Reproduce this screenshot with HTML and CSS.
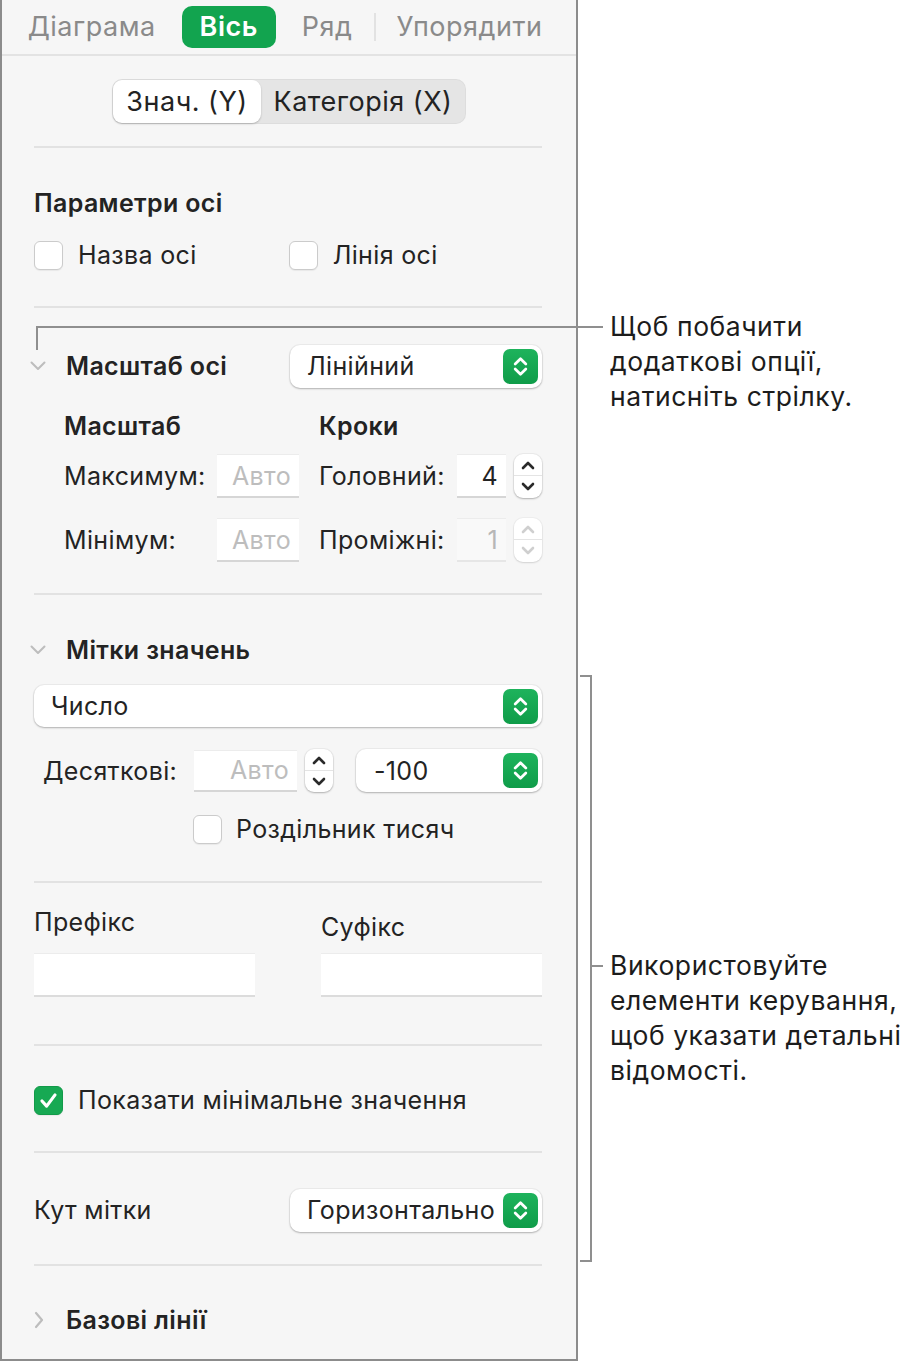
FILE: index.html
```html
<!DOCTYPE html>
<html lang="uk">
<head>
<meta charset="utf-8">
<title>Вісь</title>
<link rel="stylesheet" href="styles.css">
</head>
<body>
<svg class="defs" width="0" height="0" aria-hidden="true">
  <defs>
    <symbol id="updown" viewBox="0 0 36 36">
      <path d="M12.5 15.5 L18 10 L23.5 15.5" fill="none" stroke="#fff" stroke-width="2.8" stroke-linecap="round" stroke-linejoin="round"/>
      <path d="M12.5 20.5 L18 26 L23.5 20.5" fill="none" stroke="#fff" stroke-width="2.8" stroke-linecap="round" stroke-linejoin="round"/>
    </symbol>
    <symbol id="stepper" viewBox="0 0 28 44">
      <path d="M9 14 L14 9 L19 14" fill="none" stroke="currentColor" stroke-width="2.6" stroke-linecap="round" stroke-linejoin="round"/>
      <path d="M9 30 L14 35 L19 30" fill="none" stroke="currentColor" stroke-width="2.6" stroke-linecap="round" stroke-linejoin="round"/>
    </symbol>
    <symbol id="chev-down" viewBox="0 0 16 10">
      <path d="M1.5 1.5 L8 8 L14.5 1.5" fill="none" stroke="currentColor" stroke-width="2" stroke-linecap="round" stroke-linejoin="round"/>
    </symbol>
    <symbol id="chev-right" viewBox="0 0 10 18">
      <path d="M2 2 L8 9 L2 16" fill="none" stroke="currentColor" stroke-width="2.2" stroke-linecap="round" stroke-linejoin="round"/>
    </symbol>
  </defs>
</svg>
<div class="page">
  <div class="panel">
    <div class="tabs">
      <span class="tab">Діаграма</span>
      <span class="tab active">Вісь</span>
      <span class="tab">Ряд</span>
      <span class="tab-sep"></span>
      <span class="tab">Упорядити</span>
    </div>

    <div class="seg-wrap">
      <div class="seg">
        <span class="seg-item sel">Знач. (Y)</span>
        <span class="seg-item">Категорія (X)</span>
      </div>
    </div>

    <div class="hr hr-a"></div>

    <div class="title-row">Параметри осі</div>
    <div class="check-row">
      <label class="check"><span class="box"></span><span>Назва осі</span></label>
      <label class="check check-2"><span class="box"></span><span>Лінія осі</span></label>
    </div>

    <div class="hr hr-b"></div>

    <div class="disclosure-row scale-row">
      <svg class="chev-down"><use href="#chev-down"/></svg>
      <span class="dlabel">Масштаб осі</span>
      <div class="popup popup-scale"><span class="popup-text">Лінійний</span><span class="popup-btn"><svg><use href="#updown"/></svg></span></div>
    </div>

    <div class="scale-grid">
      <span class="bold c1">Масштаб</span>
      <span class="bold c3">Кроки</span>

      <span class="lbl">Максимум:</span>
      <span class="field placeholder">Авто</span>
      <span class="lbl c3">Головний:</span>
      <span class="field small">4</span>
      <span class="stepper"><svg><use href="#stepper"/></svg></span>

      <span class="lbl">Мінімум:</span>
      <span class="field placeholder">Авто</span>
      <span class="lbl c3">Проміжні:</span>
      <span class="field small disabled">1</span>
      <span class="stepper disabled"><svg><use href="#stepper"/></svg></span>
    </div>

    <div class="hr hr-c"></div>

    <div class="disclosure-row labels-row">
      <svg class="chev-down"><use href="#chev-down"/></svg>
      <span class="dlabel">Мітки значень</span>
    </div>

    <div class="popup popup-number"><span class="popup-text">Число</span><span class="popup-btn"><svg><use href="#updown"/></svg></span></div>

    <div class="decimal-row">
      <span class="lbl dec-lbl">Десяткові:</span>
      <span class="field placeholder dec-field">Авто</span>
      <span class="stepper dec-stepper"><svg><use href="#stepper"/></svg></span>
      <div class="popup popup-neg"><span class="popup-text">-100</span><span class="popup-btn"><svg><use href="#updown"/></svg></span></div>
    </div>

    <div class="sep-row">
      <label class="check"><span class="box"></span><span>Роздільник тисяч</span></label>
    </div>

    <div class="hr hr-d"></div>

    <div class="affix-grid">
      <span class="affix-lbl">Префікс</span>
      <span class="affix-lbl suffix">Суфікс</span>
      <span class="field wide"></span>
      <span class="field wide"></span>
    </div>

    <div class="hr hr-e"></div>

    <div class="min-row">
      <label class="check"><span class="box checked"><svg viewBox="0 0 29 29"><path d="M7.5 15 L12.5 20.5 L21.5 8.5" fill="none" stroke="#fff" stroke-width="3.4" stroke-linecap="round" stroke-linejoin="round"/></svg></span><span>Показати мінімальне значення</span></label>
    </div>

    <div class="hr hr-f"></div>

    <div class="angle-row">
      <span class="lbl">Кут мітки</span>
      <div class="popup popup-angle"><span class="popup-text">Горизонтально</span><span class="popup-btn"><svg><use href="#updown"/></svg></span></div>
    </div>

    <div class="hr hr-g"></div>

    <div class="disclosure-row base-row">
      <svg class="chev-right"><use href="#chev-right"/></svg>
      <span class="dlabel">Базові лінії</span>
    </div>
  </div>

  <div class="leader leader-h"></div>
  <div class="leader leader-v"></div>
  <p class="callout callout-1">Щоб побачити<br>додаткові опції,<br>натисніть стрілку.</p>

  <div class="bracket"></div>
  <div class="bracket-tick"></div>
  <p class="callout callout-2">Використовуйте<br>елементи керування,<br>щоб указати детальні<br>відомості.</p>
</div>
</body>
</html>
```

FILE: styles.css
```css
* { box-sizing: border-box; }

html, body {
  margin: 0;
  padding: 0;
  background: #ffffff;
}

body {
  font-family: "Inter", "Noto Sans", "DejaVu Sans", sans-serif;
  font-size: 25px;
  letter-spacing: 0.35px;
  color: #232323;
}

.defs { position: absolute; width: 0; height: 0; overflow: hidden; }

.page {
  position: relative;
  width: 916px;
  height: 1362px;
}

.panel {
  width: 578px;
  height: 1361px;
  background: #f6f6f6;
  border-left: 2px solid #8c8c8c;
  border-right: 2px solid #8c8c8c;
  border-bottom: 2px solid #8c8c8c;
  padding: 0 34px 0 32px;
  overflow: hidden;
}

/* Tabs */
.tabs {
  height: 56px;
  margin: 0 -34px 0 -32px;
  border-bottom: 2px solid #e3e3e3;
  display: flex;
  align-items: center;
  justify-content: center;
  gap: 26px;
  padding-right: 8px;
}

.tab {
  color: #8a8a8a;
  font-size: 27px;
  letter-spacing: 0.5px;
  line-height: 42px;
  height: 42px;
}

.tab.active {
  background: #12a44f;
  color: #ffffff;
  font-weight: 600;
  border-radius: 10px;
  padding: 0 18px;
  margin: 0;
}

.tab-sep {
  width: 2px;
  height: 28px;
  background: #e2e2e2;
  margin: 0 -5px;
}

/* Segmented */
.seg-wrap {
  display: flex;
  justify-content: center;
  margin-top: 23px;
  padding-left: 2px;
}

.seg {
  display: flex;
  height: 45px;
  background: #e5e5e5;
  border-radius: 10px;
  padding: 1px;
  box-shadow: inset 0 0 0 1px rgba(0,0,0,0.03);
}

.seg-item {
  display: flex;
  align-items: center;
  justify-content: center;
  padding: 0 8px;
  font-size: 27px;
  letter-spacing: 0.5px;
  color: #232323;
  white-space: nowrap;
}

.seg-item.sel {
  background: #ffffff;
  border-radius: 9px;
  box-shadow: 0 1px 2px rgba(0,0,0,0.22);
  width: 148px;
}

.seg-item + .seg-item { width: 204px; }

/* Separators */
.hr {
  height: 2px;
  background: #e2e2e2;
}
.hr-a { margin-top: 22px; }
.hr-b { margin-top: 37px; }
.hr-c { margin-top: 31px; }
.hr-d { margin-top: 38px; }
.hr-e { margin-top: 47px; }
.hr-f { margin-top: 36px; }
.hr-g { margin-top: 32px; }

.title-row {
  margin-top: 38px;
  height: 34px;
  line-height: 34px;
  font-weight: 600;
}

/* Checkboxes */
.check-row {
  margin-top: 21px;
  height: 28px;
  display: flex;
  align-items: center;
}

.check {
  display: flex;
  align-items: center;
  gap: 15px;
}

.check-2 { margin-left: 92px; }

.box {
  width: 29px;
  height: 29px;
  border-radius: 6px;
  background: #ffffff;
  border: 1px solid #cbcbcb;
  box-shadow: 0 1px 1px rgba(0,0,0,0.06);
  flex: none;
  display: flex;
}

.box.checked {
  background: #17a953;
  border-color: #129a49;
}

.box.checked svg { width: 100%; height: 100%; }

/* Disclosure rows */
.disclosure-row {
  display: flex;
  align-items: center;
}

.chev-down {
  width: 16px;
  height: 10px;
  color: #bdbdbd;
  margin-left: -4px;
  flex: none;
}

.chev-right {
  width: 10px;
  height: 18px;
  color: #bdbdbd;
  margin-left: 0;
  flex: none;
}

.dlabel {
  font-weight: 600;
  margin-left: 20px;
}

.base-row .dlabel { margin-left: 22px; }

.scale-row {
  margin-top: 36px;
  height: 44px;
}

.labels-row {
  margin-top: 38px;
  height: 34px;
}

.base-row {
  margin-top: 37px;
  height: 34px;
}

/* Popups */
.popup {
  height: 43px;
  background: #ffffff;
  border-radius: 10px;
  box-shadow: 0 1px 2px rgba(0,0,0,0.25), 0 0 0 1px rgba(0,0,0,0.04);
  display: flex;
  align-items: center;
  justify-content: space-between;
  padding: 0 4px 0 17px;
}

.popup-scale { width: 252px; margin-left: auto; }

.popup-btn {
  width: 35px;
  height: 35px;
  border-radius: 7px;
  background: linear-gradient(#1eb35c, #0f9c49);
  display: flex;
  flex: none;
}
.popup-btn svg { width: 35px; height: 35px; }

/* Scale grid */
.scale-grid {
  margin-top: 23px;
  padding-left: 30px;
  display: grid;
  grid-template-columns: 153px 82px 158px 49px 36px;
  grid-template-rows: 30px 57px 64px;
  align-items: end;
}

.scale-grid .bold { line-height: 30px; }
.scale-grid .lbl { line-height: 44px; }
.scale-grid .c1 { grid-column: 1 / 3; }
.scale-grid .c3 { grid-column: 3; padding-left: 20px; }
.scale-grid .bold.c3 { grid-column: 3 / 6; }
.bold { font-weight: 600; }

.field {
  height: 44px;
  background: #ffffff;
  border-top: 1px solid #ececec;
  border-bottom: 2px solid #d6d6d6;
  display: flex;
  align-items: center;
  justify-content: flex-end;
  padding-right: 8px;
  color: #232323;
}

.field.placeholder { color: #bdbdbd; }
.field.disabled { background: #f9f9f9; color: #b7b7b7; border-bottom-color: #e6e6e6; }

.stepper {
  width: 28px;
  height: 44px;
  justify-self: end;
  border-radius: 9px;
  background: #ffffff;
  box-shadow: 0 1px 2px rgba(0,0,0,0.25), 0 0 0 1px rgba(0,0,0,0.04);
  color: #2a2a2a;
  display: flex;
  position: relative;
}
.stepper::after {
  content: "";
  position: absolute;
  left: 0;
  right: 0;
  top: 21px;
  height: 1px;
  background: #e4e4e4;
}
.stepper svg { width: 28px; height: 44px; }
.stepper.disabled { color: #cfcfcf; box-shadow: 0 1px 2px rgba(0,0,0,0.12), 0 0 0 1px rgba(0,0,0,0.03); }

/* Value labels */
.popup-number {
  margin-top: 18px;
  height: 42px;
}

.decimal-row {
  margin-top: 22px;
  height: 43px;
  display: flex;
  align-items: center;
  padding-left: 9px;
}

.dec-lbl { width: 151px; flex: none; }
.dec-field { width: 103px; flex: none; height: 42px; }
.dec-stepper { margin-left: 8px; flex: none; height: 43px; }
.popup-neg { width: 186px; margin-left: 23px; padding-left: 18px; }

.sep-row {
  margin-top: 23px;
  height: 28px;
  display: flex;
  align-items: center;
  padding-left: 159px;
}

.sep-row .check { gap: 14px; }

/* Prefix / suffix */
.affix-grid {
  margin-top: 22px;
  display: grid;
  grid-template-columns: 221px 221px;
  column-gap: 66px;
  grid-template-rows: 34px 44px;
  row-gap: 14px;
}

.affix-lbl { line-height: 34px; }
.affix-lbl.suffix { transform: translateY(5px); }

.field.wide { height: 44px; border-bottom-color: #dcdcdc; }

.min-row {
  margin-top: 39px;
  height: 30px;
  display: flex;
  align-items: center;
}

.angle-row {
  margin-top: 35px;
  height: 44px;
  display: flex;
  align-items: center;
  justify-content: space-between;
}

.popup-angle { width: 252px; padding-left: 17px; }

/* Callouts */
.leader {
  position: absolute;
  background: #8f8f8f;
}
.leader-h { left: 36px; top: 326px; width: 567px; height: 2px; }
.leader-v { left: 36px; top: 326px; width: 2px; height: 24px; }

.bracket {
  position: absolute;
  left: 580px;
  top: 675px;
  width: 12px;
  height: 587px;
  border: 2px solid #8f8f8f;
  border-left: none;
}

.bracket-tick {
  position: absolute;
  left: 592px;
  top: 965px;
  width: 11px;
  height: 2px;
  background: #8f8f8f;
}

.callout {
  position: absolute;
  left: 610px;
  margin: 0;
  font-size: 26.5px;
  letter-spacing: 0.55px;
  line-height: 35px;
  color: #1c1c1c;
  white-space: nowrap;
}
.callout-1 { top: 309px; }
.callout-2 { top: 948px; }
```
